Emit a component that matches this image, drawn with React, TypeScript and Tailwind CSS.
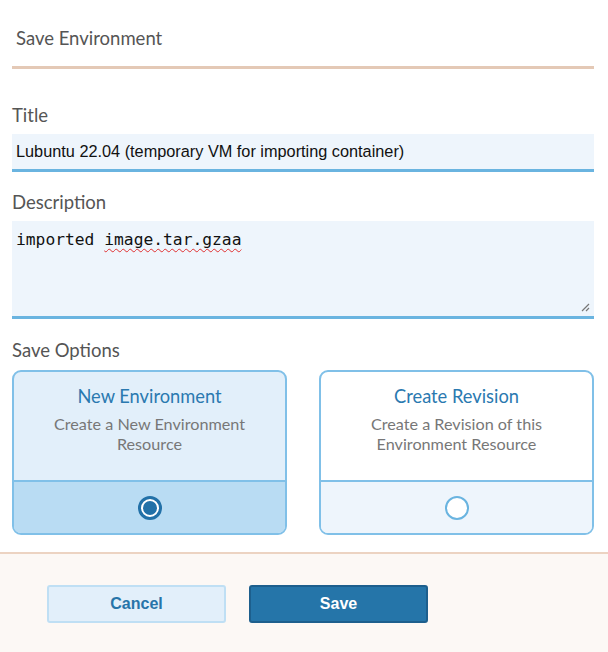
import { useState } from 'react'

const lato = { fontFamily: 'Lato, "Open Sans", sans-serif' }

type OptionProps = {
  title: string
  lines: string[]
  selected: boolean
  onSelect: () => void
}

function OptionCard({ title, lines, selected, onSelect }: OptionProps) {
  return (
    <button
      type="button"
      onClick={onSelect}
      className={`flex flex-col w-[275px] h-[165px] rounded-[9px] border-2 border-[#80c0e8] overflow-hidden text-center ${
        selected ? 'bg-[#e2effa]' : 'bg-white'
      }`}
    >
      <div className="h-[108px] pt-[12px] font-['Lato',sans-serif]">
        <div className="text-[18.3px] leading-6 text-[#2a79b0]">{title}</div>
        <div className="mt-[6px] text-[16.2px] leading-5 text-[#777]">
          {lines.map((l) => (
            <div key={l}>{l}</div>
          ))}
        </div>
      </div>
      <div
        className={`flex-1 flex items-center justify-center border-t-2 border-[#80c0e8] ${
          selected ? 'bg-[#b9dcf3]' : 'bg-[#eef5fc]'
        }`}
      >
        {selected ? (
          <span className="w-[24px] h-[24px] rounded-full border-[3px] border-[#2271a8] bg-white flex items-center justify-center">
            <span className="w-[14px] h-[14px] rounded-full bg-[#2271a8]" />
          </span>
        ) : (
          <span className="w-[24px] h-[24px] rounded-full border-2 border-[#6ab4e0] bg-white" />
        )}
      </div>
    </button>
  )
}

function App() {
  const [choice, setChoice] = useState<'new' | 'revision'>('new')

  return (
    <div className="w-[608px] h-[652px] bg-white flex flex-col overflow-hidden" style={lato}>
      <div className="pl-3 pr-[14px]">
        <div className="pt-[26px] pb-4 pl-1 text-[18.5px] leading-6 text-[#555]">Save Environment</div>
        <div className="h-[3px] bg-[#e4c9b6]" />

        <div className="mt-[34px] mb-[7px] text-[18.5px] leading-6 text-[#555]">Title</div>
        <div className="h-[38px] bg-[#eef5fc] border-b-[3px] border-[#6ab4e0] pl-1 flex items-center text-[16.3px] text-[#111] font-['Liberation_Sans',Arial,sans-serif]">
          Lubuntu 22.04 (temporary VM for importing container)
        </div>

        <div className="mt-[18px] mb-[7px] text-[18.5px] leading-6 text-[#555]">Description</div>
        <div className="relative h-[98px] bg-[#eef5fc] border-b-[3px] border-[#6ab4e0] pl-1 pt-[9px] text-[16.3px] leading-5 text-[#111] font-['DejaVu_Sans_Mono',monospace]">
          imported{' '}
          <span className="underline decoration-wavy decoration-[#e03030] decoration-1 underline-offset-[3px]">
            image.tar.gzaa
          </span>
          <svg className="absolute right-[4px] bottom-[4px]" width="9" height="9" viewBox="0 0 9 9">
            <path d="M8 1 L1 8 M8 5 L5 8" stroke="#777" strokeWidth="1.2" />
          </svg>
        </div>

        <div className="mt-[19px] mb-[8px] text-[18.5px] leading-6 text-[#555]">Save Options</div>
        <div className="flex gap-8">
          <OptionCard
            title="New Environment"
            lines={['Create a New Environment', 'Resource']}
            selected={choice === 'new'}
            onSelect={() => setChoice('new')}
          />
          <OptionCard
            title="Create Revision"
            lines={['Create a Revision of this', 'Environment Resource']}
            selected={choice === 'revision'}
            onSelect={() => setChoice('revision')}
          />
        </div>
      </div>

      <div className="mt-[17px] flex-1 border-t-2 border-[#ecd3c2] bg-[#fcf8f5] pt-[31px] pl-[47px] flex gap-[23px] items-start font-['Liberation_Sans',Arial,sans-serif]">
        <button
          type="button"
          className="w-[179px] h-[38px] rounded-[3px] border-2 border-[#bfdff4] bg-[#e2effa] text-[16px] font-bold text-[#2774a9]"
        >
          Cancel
        </button>
        <button
          type="button"
          className="w-[179px] h-[38px] rounded-[3px] border-2 border-[#1d5f8d] bg-[#2575a9] text-[16px] font-bold text-white"
        >
          Save
        </button>
      </div>
    </div>
  )
}

export default App
